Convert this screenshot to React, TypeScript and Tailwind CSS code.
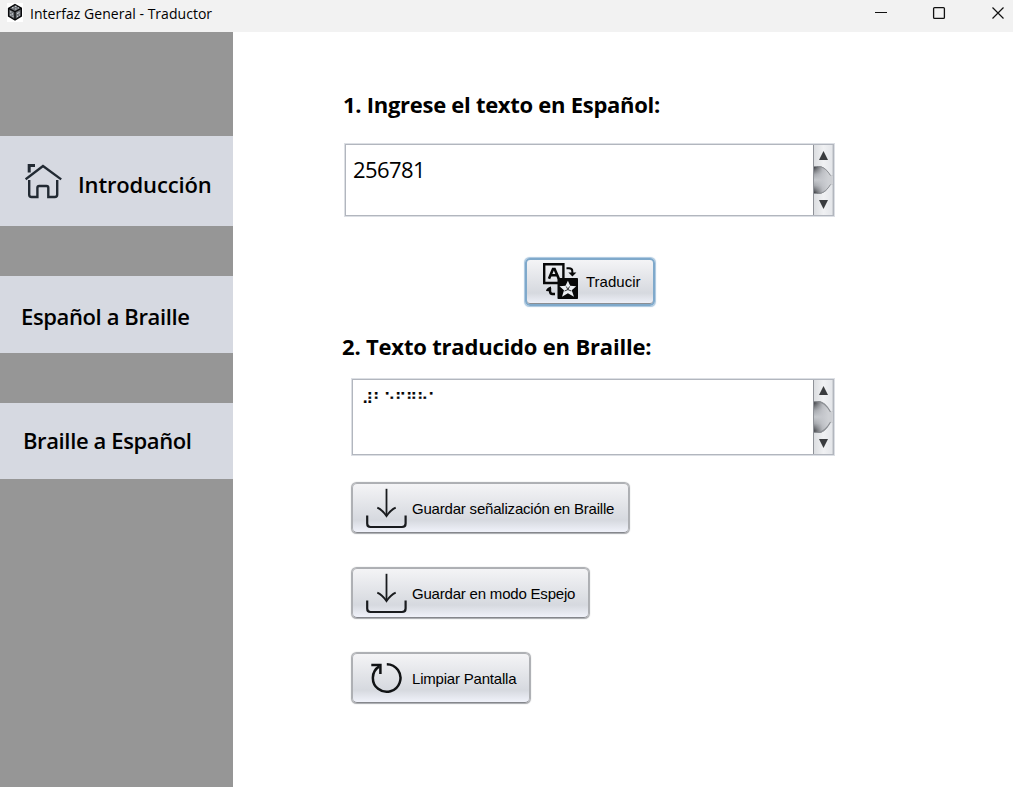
import type { ReactNode } from "react";

function AppLogo() {
  return (
    <svg width="16" height="19" viewBox="0 0 16 19" className="shrink-0">
      <rect width="16" height="19" fill="#fff" />
      <path d="M8 1.6 14.3 5.2V13L8 17 1.6 13.2V5.4Z" fill="#6a6e73" stroke="#08090b" strokeWidth="1.4" />
      <path d="M1.6 5.4 8 8.8 14.2 5.4M8 8.8V16.8" stroke="#08090b" strokeWidth="1.4" fill="none" />
      <path d="M5 4.7h1.5M8 3.4h1.5M8 6h1.5M10.8 4.8h1M3 8.8h1.4M3 11.8h1.4M5.4 10.2v1.6M5.4 13.4h1M10 10.4h1.4M12 8.8v1.4M10 13.4h1M12 12h1" stroke="#c6cacf" strokeWidth="1.2" />
    </svg>
  );
}

function HomeIcon() {
  return (
    <svg width="38" height="36" viewBox="0 0 38 36" fill="none" stroke="#222a33" strokeWidth="2.4" className="shrink-0">
      <path d="M.6 15.4 18 2 36.2 15.4" />
      <path d="M4.2 8.4V1.6H10" strokeWidth="3" />
      <path d="M4.2 16V30.8Q4.2 33 6.5 33H12.4V23.8Q12.4 22 14.2 22H21.5Q23.3 22 23.3 23.8V33H29.8Q32.2 33 32.2 30.8V16" />
    </svg>
  );
}

function TranslateIcon() {
  return (
    <svg width="35" height="36" viewBox="0 0 35 36" fill="none" stroke="#080808" className="relative bottom-px shrink-0">
      <path d="M15 20H1.2V1.2H20.4V15" strokeWidth="2.4" />
      <path d="M6 15.8 10 6h1.6L15.8 15.8M7.6 12.3h6.6" strokeWidth="2.6" />
      <rect x="14.500" y="15" width="20.500" height="21" rx="0.8" fill="#080808" stroke="none" />
      <path d="m24.9 17.8 2.3 5 6 .4-4.5 4.1 2.3 6.4-6.1-3.4-5.9 3.4 2-6.4-4.5-4.1 6-.4Z" fill="#eceef2" stroke="none" />
      <path d="M23.3 23.5l1.6 3.1 1.6-3.1M21.500 28l3.4-1.4 3.4 1.400" strokeWidth="0.8" />
      <path d="M23.500 5.300H26Q29.300 5.300 29.300 8V11" strokeWidth="2" />
      <path d="m25.400 9.500 4 4 4-4Z" fill="#080808" stroke="none" />
      <path d="M7 25V28Q7 31 9.500 31H12" strokeWidth="2.400" />
      <path d="M3 28Q3.500 24.500 8 23.500V28.500Z" fill="#080808" stroke="none" />
    </svg>
  );
}

function DownloadIcon() {
  return (
    <svg width="41" height="41" viewBox="0 0 41 41" fill="none" stroke="#191b1e" className="shrink-0">
      <path d="M20.500.8V27.800" strokeWidth="1.800" />
      <path d="M11.300 19.600Q16 21.500 20.500 28 25 21.500 29.700 19.600" strokeWidth="2" />
      <path d="M1.200 27.500V35.500Q1.200 39 4.500 39H36Q39.600 39 39.600 35.500V27.500" strokeWidth="2.200" />
    </svg>
  );
}

function ResetIcon() {
  return (
    <svg width="31" height="32" viewBox="0 0 31 32" fill="none" stroke="#111315" strokeWidth="2.500" className="shrink-0">
      <path d="M15.800 2.200A13.800 13.800 0 1 1 8.200 4.400" />
      <path d="M.3 3H9.400V12" />
    </svg>
  );
}

function ScrollBar({ track }: { track: "short" | "tall" }) {
  return (
    <div className="flex w-5 shrink-0 flex-col items-start border-l border-[#8f9298] bg-linear-to-r from-[#dcdee1] via-[#f0f1f3] to-[#e3e5e9] pt-[6px] pb-[6px] shadow-[inset_-1px_0_#cfd2d6]">
      <svg width="9" height="9" viewBox="0 0 9 9" className="ml-[5px] shrink-0">
        <path d="M4.500 0 9 9H0Z" fill="#3a3c3f" />
      </svg>
      <svg width="19" height={track === "short" ? 28 : 32} viewBox="0 0 19 28" preserveAspectRatio="none" className="mt-[6px] shrink-0">
        <defs>
          <linearGradient id={`body-${track}`} x1="0" y1="0" x2="0" y2="1">
            <stop offset="0" stopColor="#2e3034" />
            <stop offset="0.3" stopColor="#a2a5aa" />
            <stop offset="0.5" stopColor="#c6c9cd" />
            <stop offset="0.7" stopColor="#a2a5aa" />
            <stop offset="1" stopColor="#2e3034" />
          </linearGradient>
          <linearGradient id={`edge-${track}`}>
            <stop offset="0" stopColor="#c6c8cd" stopOpacity="0" />
            <stop offset="0.45" stopColor="#c6c8cd" stopOpacity="0.85" />
            <stop offset="0.75" stopColor="#ced0d4" />
          </linearGradient>
        </defs>
        <path d="M0 0H3.500C10 0 13.500 4.500 16.500 9.500H19V18.500H16.500C13.500 23.500 10 28 3.500 28H0Z" fill={`url(#body-${track})`} />
        <path d="M0 0H3.500C10 0 13.500 4.500 16.500 9.500H19V18.500H16.500C13.500 23.500 10 28 3.500 28H0Z" fill={`url(#edge-${track})`} />
        <path d="M0 .5H3.500C10 .5 13.500 4.800 16.500 9.500M16.500 18.500C13.500 23.200 10 27.500 3.500 27.500H0" stroke="#8b8e93" fill="none" />
      </svg>
      <svg width="9" height="9" viewBox="0 0 9 9" className="mt-auto ml-[5px] shrink-0">
        <path d="M0 0H9L4.500 9Z" fill="#3a3c3f" />
      </svg>
    </div>
  );
}

function ActionButton({ icon, label, className, focused = false }: { icon: ReactNode; label: string; className: string; focused?: boolean }) {
  const edge = focused
    ? "border-2 border-[#7fa9cb] shadow-[0_0_1px_0.5px_#a9c6df,inset_0_-1px_#8b8e93]"
    : "border border-[#adafb3] border-b-[#85878c] shadow-[0_0_1px_0.5px_#a7a9ad]";
  return (
    <button
      className={`flex items-center rounded-[5px] bg-linear-to-b from-[#f4f4f6] via-[#d6d9df] via-75% to-[#f0f2fa] font-['Liberation_Sans',sans-serif] text-[15px] whitespace-nowrap text-black ${edge} ${className}`}
    >
      {icon}
      <span className={focused ? "pt-px" : "pt-[3px]"}>{label}</span>
    </button>
  );
}

export default function App() {
  return (
    <div className="flex h-[787px] w-[1013px] flex-col overflow-hidden bg-white font-['Open_Sans','Noto_Sans',sans-serif] text-black">
      <header className="flex h-8 shrink-0 items-start bg-[#f2f2f2] pt-[3px] pl-[7px]">
        <AppLogo />
        <h1 className="ml-[7px] text-[14px] leading-[22px] tracking-[0.03px] whitespace-nowrap">Interfaz General - Traductor</h1>
        <svg width="131" height="20" viewBox="0 0 131 20" className="mt-px mr-[7px] ml-auto" fill="none" stroke="#111">
          <path d="M0 8.500H12" />
          <rect x="58.600" y="3.600" width="10.800" height="10.800" rx="1" strokeWidth="1.300" />
          <path d="M117.500 3.500l11 11M128.500 3.500l-11 11" strokeWidth="1.200" />
        </svg>
      </header>

      <div className="flex min-h-0 flex-1">
        <nav className="flex w-[233px] shrink-0 flex-col gap-[50px] bg-[#969696] pt-[104px] text-[22px] leading-[30px] font-semibold whitespace-nowrap">
          <a className="flex h-[90px] items-start bg-[#d6d9e1] pt-7 pl-[25px]">
            <HomeIcon />
            <span className="mt-[5px] ml-[15px] tracking-[-0.15px]">Introducción</span>
          </a>
          <a className="flex h-[77px] items-start bg-[#d6d9e1] pt-[25px] pl-[21px] tracking-[-0.38px]">Español a Braille</a>
          <a className="flex h-[76px] items-start bg-[#d6d9e1] pt-[22px] pl-[23px] tracking-[-0.38px]">Braille a Español</a>
        </nav>

        <main className="flex min-w-0 flex-1 flex-col items-start pt-[57px] pl-[109px]">
          <h2 className="ml-px h-[30px] text-[22px] leading-[30px] font-bold tracking-[-0.28px] whitespace-nowrap">1. Ingrese el texto en Español:</h2>
          <div className="mt-[25px] ml-[3px] flex h-[72px] w-[489px] border border-[#b2b6be] shadow-[0_0_0_1px_#dcdfe4]">
            <div className="flex-1 pt-[9px] pl-[7px] text-[22px] leading-[30px] tracking-[-0.6px]">256781</div>
            <ScrollBar track="short" />
          </div>

          <ActionButton
            focused
            icon={<TranslateIcon />}
            label="Traducir"
            className="mt-[42px] ml-[183px] h-[48px] w-[130px] gap-2 pl-4"
          />

          <h2 className="mt-[25px] h-[30px] text-[22px] leading-[30px] font-bold tracking-[-0.19px] whitespace-nowrap">2. Texto traducido en Braille:</h2>
          <div className="mt-[18px] ml-[10px] flex h-[76px] w-[482px] border border-[#b2b6be] shadow-[0_0_0_1px_#dcdfe4]">
            <div className="flex-1 pt-[8px] pl-[9px] font-['DejaVu_Sans',sans-serif] text-[15px] leading-[22px] [-webkit-text-stroke:0.3px_black]">⠼⠃⠑⠋⠛⠓⠁</div>
            <ScrollBar track="tall" />
          </div>

          <div className="mt-[28px] ml-[10px] flex flex-col items-start gap-[35px]">
            <ActionButton icon={<DownloadIcon />} label="Guardar señalización en Braille" className="h-[50px] w-[277px] gap-[5px] pl-[13px] tracking-[-0.2px]" />
            <ActionButton icon={<DownloadIcon />} label="Guardar en modo Espejo" className="h-[50px] w-[237px] gap-[5px] pl-[13px] tracking-[-0.2px]" />
            <ActionButton icon={<ResetIcon />} label="Limpiar Pantalla" className="h-[50px] w-[178px] gap-[10px] pl-[18px] tracking-[-0.2px]" />
          </div>
        </main>
      </div>
    </div>
  );
}
